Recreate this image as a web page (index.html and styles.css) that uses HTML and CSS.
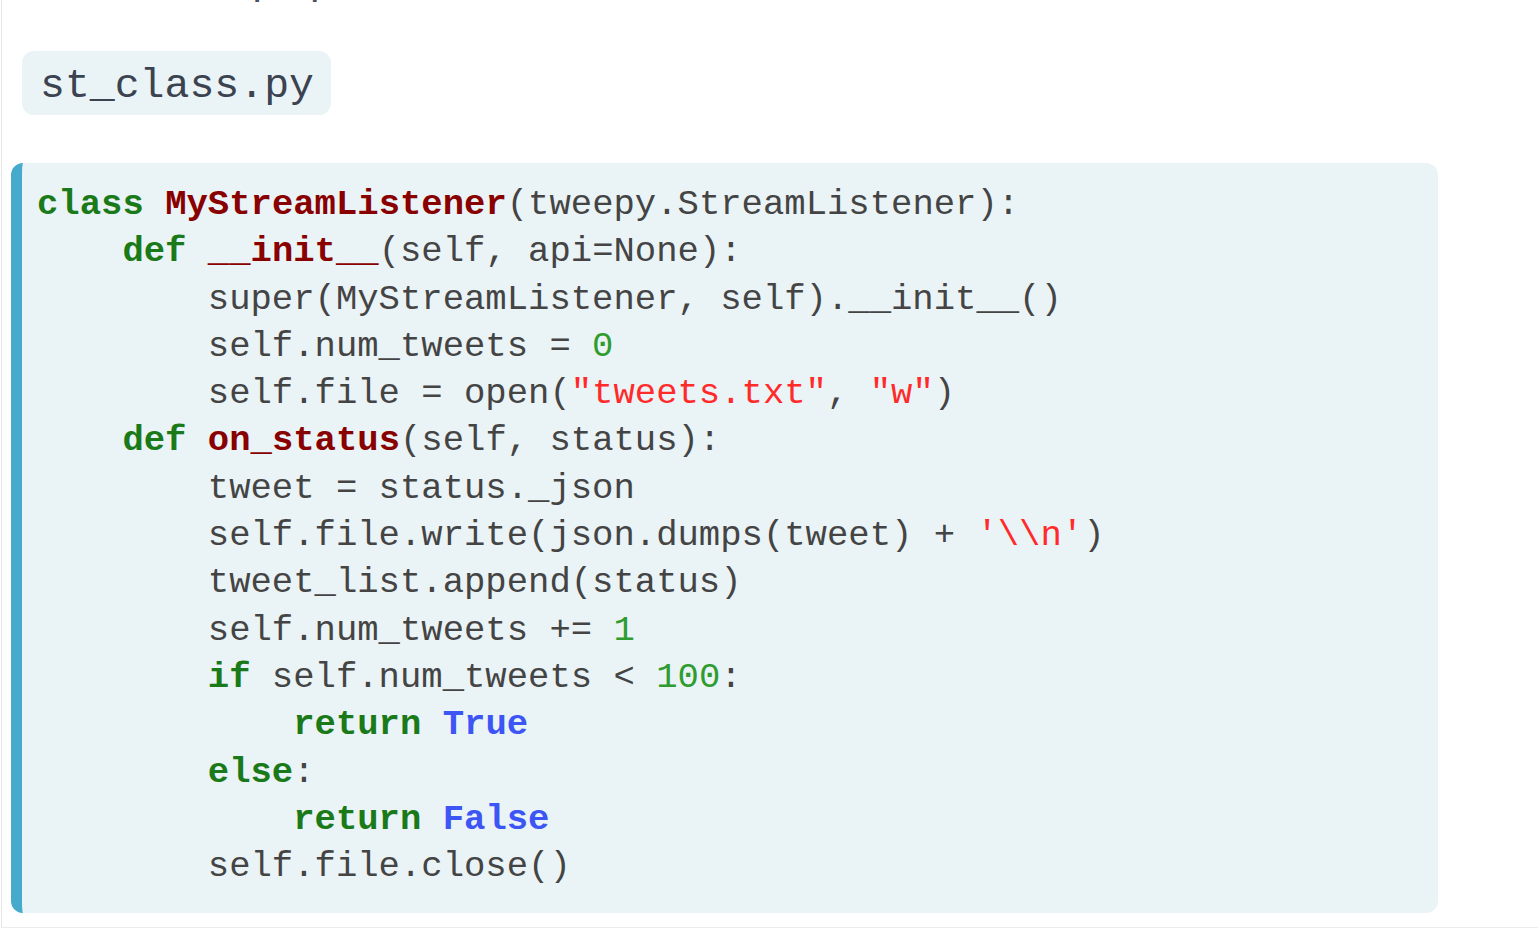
FILE: index.html
```html
<!DOCTYPE html>
<html lang="en">
<head>
<meta charset="utf-8">
<title>st_class.py</title>
<link rel="stylesheet" href="styles.css">
</head>
<body>
<div class="page">
  <div class="prev"><span class="prev-text">[]</span></div>
  <div class="chip-row"><code class="chip">st_class.py</code></div>
  <pre class="code"><span class="k">class</span> <span class="nc">MyStreamListener</span>(tweepy.StreamListener):
    <span class="k">def</span> <span class="nf">__init__</span>(self, api=None):
        super(MyStreamListener, self).__init__()
        self.num_tweets = <span class="m">0</span>
        self.file = open(<span class="s">"tweets.txt"</span>, <span class="s">"w"</span>)
    <span class="k">def</span> <span class="nf">on_status</span>(self, status):
        tweet = status._json
        self.file.write(json.dumps(tweet) + <span class="s">'\\n'</span>)
        tweet_list.append(status)
        self.num_tweets += <span class="m">1</span>
        <span class="k">if</span> self.num_tweets &lt; <span class="m">100</span>:
            <span class="k">return</span> <span class="kc">True</span>
        <span class="k">else</span>:
            <span class="k">return</span> <span class="kc">False</span>
        self.file.close()</pre>
</div>
</body>
</html>
```

FILE: styles.css
```css
html, body {
  margin: 0;
  padding: 0;
  background: #ffffff;
}

.page {
  margin-left: 1px;
  border-left: 1px solid #e6e6e6;
  border-bottom: 1px solid #ececec;
  height: 928px;
  box-sizing: border-box;
  padding-left: 9px;
  overflow: hidden;
}

.prev {
  height: 2px;
  overflow: hidden;
  position: relative;
}

.prev-text {
  position: absolute;
  left: 236px;
  bottom: -4px;
  font-family: "Liberation Mono", "DejaVu Sans Mono", monospace;
  font-size: 41.5px;
  line-height: 1;
  color: #4a5061;
  letter-spacing: 28px;
}

.chip-row {
  padding-top: 49px;
  padding-left: 11px;
  display: flex;
}

.chip {
  display: block;
  background: #eaf3f6;
  border-radius: 12px;
  padding: 11px 17px 5px 18px;
  font-family: "Liberation Mono", "DejaVu Sans Mono", monospace;
  font-size: 41.5px;
  line-height: 48px;
  color: #3b4250;
}

.code {
  margin: 48px 0 0 0;
  width: 1427px;
  box-sizing: border-box;
  background: #eaf3f6;
  border-left: 11px solid #45aacb;
  border-radius: 12px;
  padding: 18px 16px 23px 15px;
  font-family: "Liberation Mono", "DejaVu Sans Mono", monospace;
  font-size: 35.6px;
  line-height: 47.3px;
  color: #444444;
  white-space: pre;
}

.k {
  color: #1a7a1a;
  font-weight: bold;
}

.nc, .nf {
  color: #880000;
  font-weight: bold;
}

.s {
  color: #ff2a2a;
}

.m {
  color: #2f9c2f;
}

.kc {
  color: #3d55f5;
  font-weight: bold;
}
```
